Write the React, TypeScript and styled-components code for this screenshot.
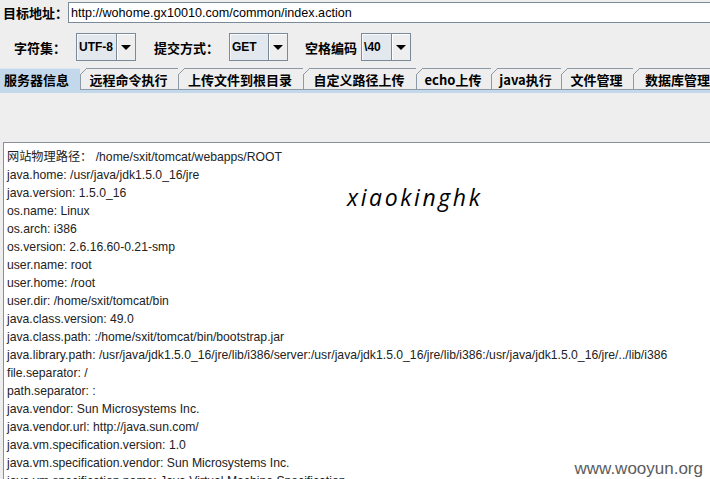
import React from "react";
import styled, { createGlobalStyle } from "styled-components";

const Global = createGlobalStyle`
  html, body {
    margin: 0;
    padding: 0;
    background: #eeeeee;
    overflow: hidden;
  }
  * { box-sizing: border-box; }
`;

const Root = styled.div`
  position: relative;
  width: 710px;
  height: 479px;
  overflow: hidden;
  background: #eeeeee;
  display: flex;
  flex-direction: column;
  font-family: "Liberation Sans", "Noto Sans CJK SC", sans-serif;
`;

const UrlRow = styled.div`
  display: flex;
  align-items: center;
  padding-top: 2px;
  height: 23px;
  flex: none;
`;

const UrlLabel = styled.div`
  width: 75px;
  padding-left: 3px;
  font: 700 13px "Noto Sans CJK SC", sans-serif;
  color: #000;
  white-space: nowrap;
`;

const UrlField = styled.div`
  flex: none;
  width: 650px;
  height: 21px;
  border: 1px solid #7a8a99;
  background: #ffffff;
  display: flex;
  align-items: center;
  padding-left: 2px;
  font: 400 12.6px "Liberation Sans", sans-serif;
  color: #000;
  white-space: nowrap;
`;

const OptionsRow = styled.div`
  display: flex;
  align-items: center;
  margin-top: 10px;
  height: 28px;
  padding-left: 14px;
  flex: none;
`;

const OptLabel = styled.div<{ $gap: number }>`
  font: 700 13px "Noto Sans CJK SC", sans-serif;
  color: #000;
  white-space: nowrap;
  margin-right: ${(p) => p.$gap}px;
`;

const Combo = styled.div<{ $gap: number }>`
  display: flex;
  height: 28px;
  border: 1px solid #7a8a99;
  background: #eeeeee;
  margin-right: ${(p) => p.$gap}px;
`;

const ComboValue = styled.div<{ $w: number }>`
  width: ${(p) => p.$w}px;
  height: 100%;
  background: #e3e8ef;
  border-right: 1px solid #7a8a99;
  box-shadow: inset 1px 1px 0 #f6f8fb;
  display: flex;
  align-items: center;
  padding-left: 2px;
  font: 700 12px "Liberation Sans", sans-serif;
  color: #000;
  white-space: nowrap;
`;

const ComboButton = styled.div`
  width: 18px;
  height: 100%;
  display: flex;
  align-items: center;
  justify-content: center;
  box-shadow: inset 1px 1px 0 #ffffff;
`;

const Arrow = styled.span`
  width: 0;
  height: 0;
  border-left: 5px solid transparent;
  border-right: 5px solid transparent;
  border-top: 5px solid #000;
`;

const TabStrip = styled.div`
  display: flex;
  margin-top: 7px;
  height: 22px;
  flex: none;
`;

const Tab = styled.div<{ $w: number; $active?: boolean; $first?: boolean }>`
  position: relative;
  flex: none;
  width: ${(p) => p.$w}px;
  height: 22px;
  margin-left: ${(p) => (p.$first ? -6 : 0)}px;
  padding: 1px 11px 0 10px;
  display: flex;
  align-items: center;
  justify-content: center;
  font: 700 13px "Noto Sans CJK SC", sans-serif;
  color: #000;
  white-space: nowrap;
  background: ${(p) => (p.$active ? "#c4d8ec" : "#eeeeee")};
  border-bottom: 1px solid ${(p) => (p.$active ? "#c4d8ec" : "#8c9aa8")};

  &::before {
    content: "";
    position: absolute;
    left: 0;
    top: 0;
    width: 7px;
    height: 100%;
    background:
      linear-gradient(
          to bottom right,
          #eeeeee calc(50% - 0.6px),
          #8c9aa8 calc(50% - 0.6px),
          #8c9aa8 calc(50% + 0.6px),
          transparent calc(50% + 0.6px)
        )
        left top / 7px 7px no-repeat,
      linear-gradient(#8c9aa8, #8c9aa8) left 0 top 6px / 1px calc(100% - 6px) no-repeat;
  }

  &::after {
    content: "";
    position: absolute;
    left: 6px;
    right: 0;
    top: 0;
    height: 1px;
    background: ${(p) => (p.$active ? "#dbe7f3" : "#8c9aa8")};
  }
`;

const TabRule = styled.div`
  height: 3px;
  background: #c4d8ec;
  flex: none;
`;

const Gap = styled.div`
  height: 49px;
  flex: none;
`;

const Console = styled.div`
  flex: 1;
  margin-left: 3px;
  margin-right: -10px;
  border: 1px solid #8a8f96;
  border-bottom: none;
  background: #ffffff;
  padding: 5px 0 0 3px;
  overflow: hidden;
`;

const Line = styled.div`
  height: 18px;
  font: 400 12.2px/18px "Liberation Sans", "Noto Sans CJK SC", sans-serif;
  color: #222;
  white-space: nowrap;
`;

const Watermark = styled.div`
  position: absolute;
  left: 347px;
  top: 186px;
  font: italic 500 23px/23px "Open Sans", sans-serif;
  letter-spacing: 2.6px;
  color: #000;
  white-space: nowrap;
`;

const Brand = styled.div`
  position: absolute;
  right: 7px;
  top: 460px;
  font: 400 17px/17px "Liberation Sans", sans-serif;
  color: #5c5c5c;
  white-space: nowrap;
`;

const tabs: { label: string; w: number }[] = [
  { label: "服务器信息", w: 86 },
  { label: "远程命令执行", w: 98 },
  { label: "上传文件到根目录", w: 125 },
  { label: "自定义路径上传", w: 113 },
  { label: "echo上传", w: 75 },
  { label: "java执行", w: 70 },
  { label: "文件管理", w: 72 },
  { label: "数据库管理", w: 90 },
];

const lines = [
  "网站物理路径： /home/sxit/tomcat/webapps/ROOT",
  "java.home: /usr/java/jdk1.5.0_16/jre",
  "java.version: 1.5.0_16",
  "os.name: Linux",
  "os.arch: i386",
  "os.version: 2.6.16.60-0.21-smp",
  "user.name: root",
  "user.home: /root",
  "user.dir: /home/sxit/tomcat/bin",
  "java.class.version: 49.0",
  "java.class.path: :/home/sxit/tomcat/bin/bootstrap.jar",
  "java.library.path: /usr/java/jdk1.5.0_16/jre/lib/i386/server:/usr/java/jdk1.5.0_16/jre/lib/i386:/usr/java/jdk1.5.0_16/jre/../lib/i386",
  "file.separator: /",
  "path.separator: :",
  "java.vendor: Sun Microsystems Inc.",
  "java.vendor.url: http://java.sun.com/",
  "java.vm.specification.version: 1.0",
  "java.vm.specification.vendor: Sun Microsystems Inc.",
  "java.vm.specification.name: Java Virtual Machine Specification",
];

export default function App() {
  return (
    <>
      <Global />
      <Root>
        <UrlRow>
          <UrlLabel>目标地址：</UrlLabel>
          <UrlField>http://wohome.gx10010.com/common/index.action</UrlField>
        </UrlRow>
        <OptionsRow>
          <OptLabel $gap={10}>字符集：</OptLabel>
          <Combo $gap={18}>
            <ComboValue $w={40}>UTF-8</ComboValue>
            <ComboButton>
              <Arrow />
            </ComboButton>
          </Combo>
          <OptLabel $gap={10}>提交方式：</OptLabel>
          <Combo $gap={17}>
            <ComboValue $w={39}>GET</ComboValue>
            <ComboButton>
              <Arrow />
            </ComboButton>
          </Combo>
          <OptLabel $gap={4}>空格编码</OptLabel>
          <Combo $gap={0}>
            <ComboValue $w={30}>\40</ComboValue>
            <ComboButton>
              <Arrow />
            </ComboButton>
          </Combo>
        </OptionsRow>
        <TabStrip>
          {tabs.map((t, i) => (
            <Tab key={t.label} $w={t.w} $active={i === 0} $first={i === 0}>
              {t.label}
            </Tab>
          ))}
        </TabStrip>
        <TabRule />
        <Gap />
        <Console>
          {lines.map((l) => (
            <Line key={l}>{l}</Line>
          ))}
        </Console>
        <Watermark>xiaokinghk</Watermark>
        <Brand>www.wooyun.org</Brand>
      </Root>
    </>
  );
}
